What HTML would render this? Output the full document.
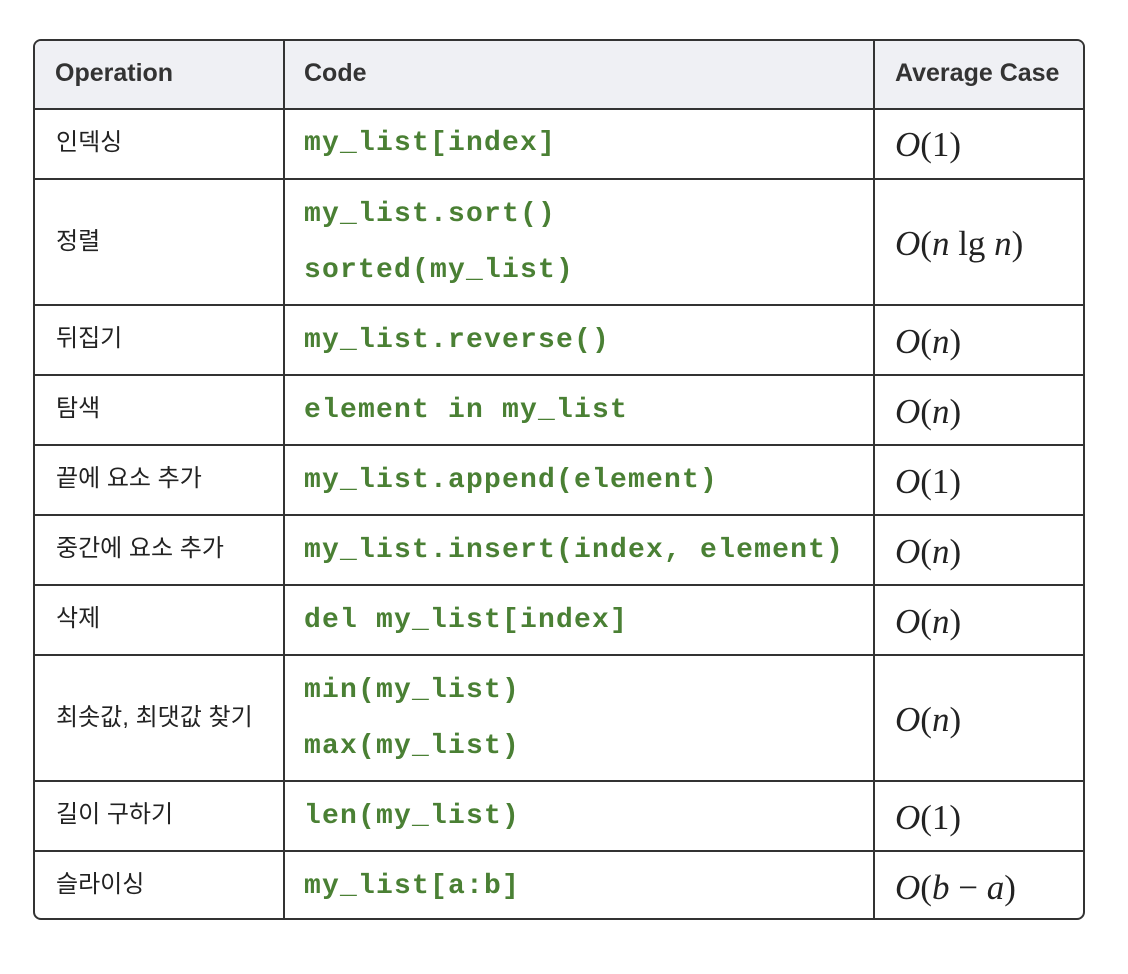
<!DOCTYPE html>
<html><head><meta charset="utf-8"><style>
body{margin:0;width:1128px;height:974px;background:#fff;position:relative;font-family:"Liberation Sans","Noto Sans CJK KR",sans-serif;color:#222}
.box{position:absolute;left:33px;top:39px;width:1048px;height:877px;border:2px solid #333;border-radius:8px;overflow:hidden}
.hd{position:absolute;left:0;top:0;width:100%;height:68px;background:#eff0f4}
.h{position:absolute;left:-2px;width:1052px;height:2px;background:#333}
.v{position:absolute;top:-2px;height:881px;width:2px;background:#333}
.t{position:absolute;white-space:nowrap;line-height:1}
.th{font-size:25px;color:#333;font-weight:bold}
.k{font-size:24px;left:21px}
.c{font-family:"Liberation Mono",monospace;font-weight:bold;color:#4a8034;font-size:28px;letter-spacing:1.2px;left:269px}
.m{font-family:"Liberation Serif",serif;font-size:35px;left:860px;color:#222}
.m i{font-style:italic}
</style></head><body>
<div class="box">
<div class="hd"></div>
<div class="h" style="top:67px"></div>
<div class="h" style="top:137px"></div>
<div class="h" style="top:263px"></div>
<div class="h" style="top:333px"></div>
<div class="h" style="top:403px"></div>
<div class="h" style="top:473px"></div>
<div class="h" style="top:543px"></div>
<div class="h" style="top:613px"></div>
<div class="h" style="top:739px"></div>
<div class="h" style="top:809px"></div>
<div class="v" style="left:248px"></div>
<div class="v" style="left:838px"></div>

<div class="t th" style="left:20px;top:20px">Operation</div>
<div class="t th" style="left:269px;top:20px">Code</div>
<div class="t th" style="left:860px;top:20px">Average Case</div>

<div class="t k" style="top:90px">인덱싱</div>
<div class="t c" style="top:89px">my_list[index]</div>
<div class="t m" style="top:86px"><i>O</i>(1)</div>

<div class="t k" style="top:189px">정렬</div>
<div class="t c" style="top:160px">my_list.sort()</div>
<div class="t c" style="top:216px">sorted(my_list)</div>
<div class="t m" style="top:185px"><i>O</i>(<i>n</i> lg <i>n</i>)</div>

<div class="t k" style="top:286px">뒤집기</div>
<div class="t c" style="top:286px">my_list.reverse()</div>
<div class="t m" style="top:283px"><i>O</i>(<i>n</i>)</div>

<div class="t k" style="top:356px">탐색</div>
<div class="t c" style="top:356px">element in my_list</div>
<div class="t m" style="top:353px"><i>O</i>(<i>n</i>)</div>

<div class="t k" style="top:426px">끝에 요소 추가</div>
<div class="t c" style="top:426px">my_list.append(element)</div>
<div class="t m" style="top:423px"><i>O</i>(1)</div>

<div class="t k" style="top:496px">중간에 요소 추가</div>
<div class="t c" style="top:496px">my_list.insert(index, element)</div>
<div class="t m" style="top:493px"><i>O</i>(<i>n</i>)</div>

<div class="t k" style="top:566px">삭제</div>
<div class="t c" style="top:566px">del my_list[index]</div>
<div class="t m" style="top:563px"><i>O</i>(<i>n</i>)</div>

<div class="t k" style="top:665px">최솟값, 최댓값 찾기</div>
<div class="t c" style="top:636px">min(my_list)</div>
<div class="t c" style="top:692px">max(my_list)</div>
<div class="t m" style="top:661px"><i>O</i>(<i>n</i>)</div>

<div class="t k" style="top:762px">길이 구하기</div>
<div class="t c" style="top:762px">len(my_list)</div>
<div class="t m" style="top:759px"><i>O</i>(1)</div>

<div class="t k" style="top:832px">슬라이싱</div>
<div class="t c" style="top:832px">my_list[a:b]</div>
<div class="t m" style="top:829px"><i>O</i>(<i>b</i> − <i>a</i>)</div>
</div>
</body></html>
